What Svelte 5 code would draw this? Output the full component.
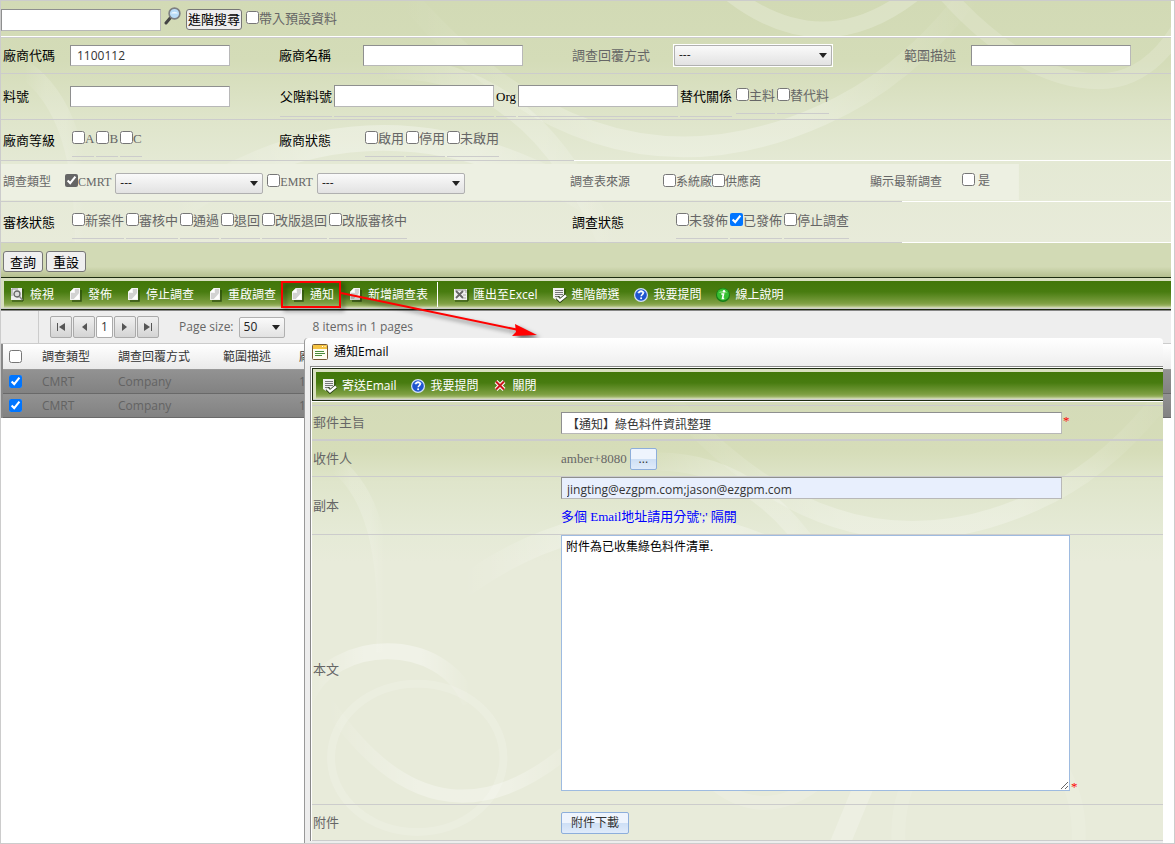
<script>
  let keyword = $state('');
  let vendorCode = $state('1100112');
  let subject = $state('【通知】綠色料件資訊整理');
  let cc = $state('jingting@ezgpm.com;jason@ezgpm.com');
  let content = $state('附件為已收集綠色料件清單.');

  const grades = ['A', 'B', 'C'];
  const vendorStates = ['啟用', '停用', '未啟用'];
  const reviewStates = ['新案件', '審核中', '通過', '退回', '改版退回', '改版審核中'];
  const surveyStates = ['未發佈', '已發佈', '停止調查'];

  const tools = [
    { icon: 'view', text: '檢視' },
    { icon: 'doc', text: '發佈' },
    { icon: 'doc', text: '停止調查' },
    { icon: 'doc', text: '重啟調查' },
    { icon: 'doc', text: '通知', marked: true },
    { icon: 'doc', text: '新增調查表' },
    { icon: 'excel', text: '匯出至Excel', divider: true },
    { icon: 'check', text: '進階篩選' },
    { icon: 'help', text: '我要提問' },
    { icon: 'info', text: '線上說明' }
  ];

  const dialogTools = [
    { icon: 'check', text: '寄送Email' },
    { icon: 'help', text: '我要提問' },
    { icon: 'close', text: '關閉' }
  ];

  const rows = [
    { type: 'CMRT', reply: 'Company', scope: '', vendor: '1100112' },
    { type: 'CMRT', reply: 'Company', scope: '', vendor: '1100112' }
  ];
</script>

{#snippet icon(name)}
  <svg class="icon" viewBox="0 0 16 16" aria-hidden="true">
    {#if name === 'doc'}
      <path d="M13 3v11H4" fill="none" stroke="#24440a" stroke-width="1.500" opacity=".8" />
      <path d="M6 1h6v12H2V5z" fill="#f4f4f4" />
      <path d="M7 2h4v4L6 12H3V6h4z" fill="#d2d2d2" />
      <path d="M6 1v4H2z" fill="#fff" />
      <path d="M11 7v5H6z" fill="#fff" />
    {:else if name === 'view'}
      <path d="M13 2v12H2" fill="none" stroke="#24440a" />
      <rect x="1" y="1" width="11" height="12" fill="#eee" />
      <path d="M2 9V2h6" fill="none" stroke="#999" />
      <circle cx="7" cy="7" r="3" fill="#ddd" stroke="#666" stroke-width="1.300" />
      <path d="M9.500 9.500l3 3.500" stroke="#888" stroke-width="1.500" />
    {:else if name === 'excel'}
      <path d="M15 3v11H2" fill="none" stroke="#24440a" />
      <rect x="1" y="2" width="13" height="11" fill="#f0f0f0" />
      <path d="M2 3h11v3" fill="none" stroke="#999" />
      <path d="M3 4l7 7M10 4l-7 7" stroke="#666" stroke-width="1.800" />
      <path d="M10 8h3M10 11h3" stroke="#aaa" />
    {:else if name === 'check'}
      <path d="M1 1h11v12H4l-3-2z" fill="#f0f0f0" />
      <path d="M13 2v6" stroke="#24440a" />
      <path d="M3 3.500h8M3 5.500h8M3 7.500h8M3 9.500h5" stroke="#777" />
      <path d="M5 10.500l3 3 6-5" fill="none" stroke="#263c15" stroke-width="4" />
      <path d="M5 10.500l3 3 6-5" fill="none" stroke="#fff" stroke-width="2.400" />
    {:else if name === 'help'}
      <circle cx="7" cy="8" r="7" fill="#d5e2fb" />
      <circle cx="7" cy="8" r="5.800" fill="#1f55cf" />
      <path d="M2.500 6a5 4 0 0 1 9 0" fill="#5f91e9" />
      <path d="M4.800 6.300c0-3 4.600-2.700 4.400-.2-.1 1.300-1.900 1.600-2 3.200" fill="none" stroke="#fff" stroke-width="1.600" />
      <circle cx="7.100" cy="11.300" r="1" fill="#fff" />
    {:else if name === 'info'}
      <circle cx="7" cy="8" r="7" fill="#167d18" />
      <circle cx="7" cy="7.500" r="6" fill="#36bf32" />
      <path d="M2.500 6a5 4 0 0 1 9 0" fill="#72d969" />
      <circle cx="8" cy="4.300" r="1.200" fill="#fff" />
      <path d="M5.300 7h2.200l-1 4.500h1.700" fill="none" stroke="#fff" stroke-width="1.600" />
    {:else if name === 'close'}
      <path d="M3 3.500l8 8M11 3.500l-8 8" stroke="#fff" stroke-width="4" />
      <path d="M3 3.500l8 8M11 3.500l-8 8" stroke="#c9171b" stroke-width="2" />
    {/if}
  </svg>
{/snippet}

{#snippet options(items, checked)}
  <div class="options">
    {#each items as item}
      <label class="option"><input type="checkbox" checked={item === checked} />{item}</label>
    {/each}
  </div>
{/snippet}

{#snippet combo(text, name)}
  <span class="combo"><select aria-label={name}><option>{text}</option></select></span>
{/snippet}

{#snippet swirls()}
  <g fill="none" stroke="url(#fade)">
    <path d="M20 60Q80 100 72 250" stroke-width="16" opacity=".15" />
    <path d="M150 185Q330 55 530 185" stroke-width="22" opacity=".3" />
    <path d="M350 -10Q520 190 720 100Q800 65 860 -20" stroke-width="18" opacity=".25" />
    <path d="M330 60Q470 50 540 230" stroke-width="18" opacity=".2" />
  </g>
{/snippet}

<main class="page">
  <form class="search" onsubmit={(e) => e.preventDefault()}>
    <svg class="swirl" viewBox="0 0 1170 242" preserveAspectRatio="xMinYMin slice" aria-hidden="true">
      <defs>
        <linearGradient id="fade">
          <stop offset="0" stop-color="#fff" stop-opacity="0" />
          <stop offset=".35" stop-color="#fff" />
          <stop offset=".7" stop-color="#fff" />
          <stop offset="1" stop-color="#fff" stop-opacity="0" />
        </linearGradient>
      </defs>
      {@render swirls()}
      <g fill="none" stroke="#fff">
        <path d="M635 -10Q720 60 805 -10" stroke-width="14" opacity=".22" />
        <path d="M825 -10Q900 75 970 70Q1020 65 1050 -10" stroke-width="14" opacity=".16" />
      </g>
    </svg>

    <div class="row quick">
      <input class="text" type="text" bind:value={keyword} aria-label="搜尋" />
      <svg class="magnifier" viewBox="0 0 18 18" aria-hidden="true">
        <path d="M2 16l5-6" stroke="#444" stroke-width="3" stroke-linecap="round" />
        <circle cx="10.500" cy="6.500" r="5.400" fill="#b9dcf8" stroke="#7d7f82" stroke-width="1.600" />
        <path d="M7 6.500a4 3.500 0 0 1 7 0z" fill="#eef7ff" />
      </svg>
      <button type="button">進階搜尋</button>
      <label class="inline"><input type="checkbox" />帶入預設資料</label>
    </div>

    <div class="row cols first">
      <label class="name" for="vendor-code">廠商代碼</label>
      <div><input class="text" id="vendor-code" type="text" bind:value={vendorCode} /></div>
      <label class="name" for="vendor-name">廠商名稱</label>
      <div><input class="text" id="vendor-name" type="text" /></div>
      <span class="name soft">調查回覆方式</span>
      <div class="framed">{@render combo('---', '調查回覆方式')}</div>
      <label class="name soft" for="scope">範圍描述</label>
      <div><input class="text" id="scope" type="text" /></div>
    </div>

    <div class="row cols second">
      <label class="name" for="part">料號</label>
      <div><input class="text" id="part" type="text" /></div>
      <div class="parts">
        <label class="under" for="parent-part">父階料號</label>
        <span class="under"><input class="text" id="parent-part" type="text" /></span>
        <label class="under" for="org">Org</label>
        <span class="under"><input class="text" id="org" type="text" /></span>
        <span class="under">替代關係</span>
        {@render options(['主料', '替代料'])}
      </div>
    </div>

    <div class="row cols third">
      <span class="name">廠商等級</span>
      {@render options(grades)}
      <span class="name">廠商狀態</span>
      {@render options(vendorStates)}
    </div>

    <div class="row types">
      <span>調查類型</span>
      <div class="group">
        <label class="inline gray"><input type="checkbox" checked />CMRT</label>
        {@render combo('---', 'CMRT')}
        <label class="inline"><input type="checkbox" />EMRT</label>
        {@render combo('---', 'EMRT')}
      </div>
      <span>調查表來源</span>
      <div class="group tight">
        <label class="inline"><input type="checkbox" />系統廠</label>
        <label class="inline"><input type="checkbox" />供應商</label>
      </div>
      <span>顯示最新調查</span>
      <div><label class="inline spaced"><input type="checkbox" />是</label></div>
    </div>

    <div class="row cols fifth">
      <span class="name">審核狀態</span>
      <div class="span3">{@render options(reviewStates)}</div>
      <span class="name">調查狀態</span>
      {@render options(surveyStates, '已發佈')}
    </div>

    <div class="actions">
      <button type="submit">查詢</button>
      <button type="reset">重設</button>
    </div>
  </form>

  <div class="bar">
    <nav class="tools">
      {#each tools as tool}
        {#if tool.divider}<span class="divider"></span>{/if}
        <button type="button" class="tool" class:marked={tool.marked}>
          {@render icon(tool.icon)}{tool.text}
          {#if tool.marked}
            <svg class="pointer" viewBox="0 0 270 70" aria-hidden="true">
              <g fill="none" stroke="#f00" stroke-width="2">
                <rect x="3" y="3" width="58" height="25" />
                <path d="M62 14L240 51" />
              </g>
              <path d="M236 45l22 11-25 1 4-4z" fill="#f00" />
            </svg>
          {/if}
        </button>
      {/each}
    </nav>
  </div>

  <div class="pager">
    <button type="button" aria-label="First page"><svg viewBox="0 0 10 10"><path d="M1 1h1v8H1zM9 1v8L3 5z" /></svg></button>
    <button type="button" aria-label="Previous page"><svg viewBox="0 0 10 10"><path d="M8 1v8L3 5z" /></svg></button>
    <button type="button" class="current">1</button>
    <button type="button" aria-label="Next page"><svg viewBox="0 0 10 10"><path d="M2 1v8l5-4z" /></svg></button>
    <button type="button" aria-label="Last page"><svg viewBox="0 0 10 10"><path d="M8 1h1v8H8zM1 1v8l6-4z" /></svg></button>
    <span class="size">Page size:</span>
    {@render combo('50', 'Page size')}
    <span class="total">8 items in 1 pages</span>
  </div>

  <table class="grid">
    <thead>
      <tr>
        <th class="tick"><input type="checkbox" aria-label="全選" /></th>
        <th class="type">調查類型</th>
        <th class="reply">調查回覆方式</th>
        <th class="scope">範圍描述</th>
        <th>廠商</th>
      </tr>
    </thead>
    <tbody>
      {#each rows as row}
        <tr>
          <td><input type="checkbox" checked aria-label="選取" /></td>
          <td>{row.type}</td>
          <td>{row.reply}</td>
          <td>{row.scope}</td>
          <td>{row.vendor}</td>
        </tr>
      {/each}
    </tbody>
  </table>

  <section class="dialog" role="dialog" aria-labelledby="dialog-title">
    <header>
      <svg class="form-icon" viewBox="0 0 16 16" aria-hidden="true">
        <rect x=".5" y=".5" width="15" height="15" rx="1" fill="#fffdf0" stroke="#765a35" />
        <path d="M1 1h14v4H1z" fill="#f5c343" />
        <path d="M10 2.500h1M12.500 2.500h1" stroke="#fff" />
        <path d="M3 7.500h9M3 9.500h10M3 11.500h7" stroke="#4a8c3a" />
      </svg>
      <h2 id="dialog-title">通知Email</h2>
    </header>
    <div class="frame">
      <div class="bar">
        <nav class="tools">
          {#each dialogTools as tool}
            <button type="button" class="tool">{@render icon(tool.icon)}{tool.text}</button>
          {/each}
        </nav>
      </div>
      <form class="mail" onsubmit={(e) => e.preventDefault()}>
        <svg class="swirl" viewBox="0 0 851 438" preserveAspectRatio="xMinYMin slice" aria-hidden="true">
          {@render swirls()}
          <g fill="none" stroke="#fff">
            <path d="M-5 295C20 235 130 230 158 300" stroke="url(#fade)" stroke-width="16" opacity=".35" />
            <ellipse cx="105" cy="355" rx="86" ry="74" stroke-width="8" opacity=".15" />
            <path d="M15 300Q130 470 275 330" stroke="url(#fade)" stroke-width="13" opacity=".3" />
            <path d="M395 375Q450 425 510 375" stroke-width="14" opacity=".14" />
            <path d="M560 360L525 445" stroke-width="20" opacity=".22" />
            <ellipse cx="675" cy="430" rx="90" ry="110" stroke-width="14" opacity=".1" />
          </g>
        </svg>
        <div class="line subject">
          <label for="subject">郵件主旨</label>
          <div><input class="text" id="subject" type="text" bind:value={subject} /><em>*</em></div>
        </div>
        <div class="line to">
          <span>收件人</span>
          <div>amber+8080<button type="button" class="blue more">...</button></div>
        </div>
        <div class="line cc">
          <label for="cc">副本</label>
          <div>
            <input class="text" id="cc" type="text" bind:value={cc} />
            <p>多個 Email地址請用分號';' 隔開</p>
          </div>
        </div>
        <div class="line body">
          <label for="content">本文</label>
          <div><textarea id="content" bind:value={content}></textarea><em>*</em></div>
        </div>
        <div class="line file">
          <span>附件</span>
          <div><button type="button" class="blue">附件下載</button></div>
        </div>
      </form>
    </div>
  </section>
</main>

<style>
  :global(body) {
    margin: 0;
    background: #fff;
  }

  .page {
    --ui: 'Open Sans', 'Noto Sans CJK TC', sans-serif;
    position: relative;
    box-sizing: border-box;
    min-height: 100vh;
    padding-right: 3px;
    border: 1px solid #ccc;
    overflow: hidden;
    font: 13px/18px 'Liberation Serif', 'Noto Sans CJK TC', serif;
    color: #666;
  }

  input,
  textarea,
  select {
    box-sizing: border-box;
    margin: 0;
  }

  input[type='checkbox'] {
    flex: none;
    width: 13px;
    height: 13px;
  }

  .text {
    width: 160px;
    height: 21px;
    padding: 1px 6px;
    border: 1px solid;
    border-color: #8e8f8f #b8b8b8 #b8b8b8 #8e8f8f;
    background: #fff;
    color: #333;
    font: 12px/16px var(--ui);
  }

  button {
    box-sizing: border-box;
    padding: 0 1px;
    font: 13px/18px 'Noto Sans CJK TC', sans-serif;
    white-space: nowrap;
  }

  .search button {
    height: 21px;
    border: 1px solid #767676;
    border-radius: 3px;
    background: #efefef;
    color: #000;
  }

  /* search form */
  .search {
    position: relative;
    background: linear-gradient(#d2dab5, #d4dcb8 60px, #dfe5cb 120px, #e4e9d4 160px, #e8ebda 241px);
  }

  .swirl {
    position: absolute;
    inset: 0;
    width: 100%;
    height: 100%;
    pointer-events: none;
  }

  .row {
    --split: 100%;
    position: relative;
    box-sizing: border-box;
    height: 41px;
    background: linear-gradient(to right, #ccc var(--split), #fff var(--split)) bottom / 100% 1px no-repeat;
    white-space: nowrap;
  }

  .quick {
    display: flex;
    align-items: center;
    height: 37px;
    border-bottom: 1px solid #ccc;
    background: linear-gradient(#fff, #fff) bottom / 100% 1px no-repeat;
  }

  .quick .text {
    margin-top: 2px;
    height: 22px;
  }

  .magnifier {
    width: 18px;
    height: 18px;
    margin: 0 4px 6px 3px;
  }

  .quick .inline {
    margin-left: 4px;
  }

  .inline {
    display: inline-flex;
    align-items: center;
  }

  .inline input {
    margin-bottom: 3px;
  }

  .cols {
    display: grid;
    grid-template-columns: 67px 209fr 84px 209fr 102px 230fr 67px 200fr;
    align-items: center;
    padding-left: 2px;
  }

  .first {
    height: 36px;
  }

  .second {
    height: 46px;
  }

  .third {
    --split: 49%;
  }

  .fifth {
    --split: 77%;
  }

  .name {
    color: #000;
  }

  .soft {
    color: #666;
  }

  .cols > div > .text,
  .framed {
    display: block;
    margin-bottom: 2px;
  }

  .parts {
    grid-column: 3 / -1;
    display: flex;
    align-items: flex-end;
    gap: 2px;
    margin-top: 6px;
    padding-left: 1px;
    color: #000;
  }

  .under {
    box-sizing: border-box;
    height: 32px;
    padding: 3px 0;
    border-bottom: 1px solid #ccc;
  }

  .under .text {
    display: block;
    height: 22px;
    margin-top: -3px;
  }

  .options {
    display: flex;
    align-items: flex-end;
    gap: 2px;
    height: 35px;
    margin-bottom: 2px;
    padding-left: 2px;
    color: #666;
  }

  .parts .options {
    height: 31px;
    margin-bottom: 3px;
  }

  .option {
    display: flex;
    align-items: center;
    padding-bottom: 8px;
    border-bottom: 1px solid #ccc;
  }

  .option input {
    margin-bottom: 3px;
  }

  .span3 {
    grid-column: 2 / 5;
  }

  .types {
    --split: 77%;
    display: grid;
    grid-template-columns: 62px 505fr 93px 207fr 92px 209fr;
    align-items: center;
    padding-left: 2px;
    background:
      linear-gradient(to right, #ccc var(--split), #fff var(--split)) bottom / 100% 1px no-repeat,
      linear-gradient(#edf0e2, #edf0e2) 0 3px / 87% 36px no-repeat;
    font-size: 12px;
  }

  .group {
    display: flex;
    align-items: center;
    gap: 4px;
  }

  .group .combo {
    margin-top: 3px;
  }

  .tight {
    gap: 0;
  }

  .spaced {
    gap: 3px;
  }

  .gray input {
    accent-color: #666;
  }

  .combo {
    position: relative;
    display: inline-block;
    width: 148px;
    height: 21px;
  }

  .combo select {
    display: block;
    width: 100%;
    height: 100%;
    padding: 0 4px;
    border: 1px solid #b0b0b0;
    border-radius: 2px;
    background: linear-gradient(#fafafa, #e2e2e2);
    color: #222;
    font: 12px/18px var(--ui);
    appearance: none;
  }

  .combo::after {
    content: '';
    position: absolute;
    top: 8px;
    right: 5px;
    border: 4px solid transparent;
    border-top: 5px solid #222;
    border-bottom: 0;
    pointer-events: none;
  }

  .framed .combo {
    display: block;
    width: 158px;
    outline: 1px solid #fff;
  }

  .actions {
    position: relative;
    display: flex;
    gap: 3px;
    box-sizing: border-box;
    height: 34px;
    padding: 8px 2px;
    background: linear-gradient(#d2dab5 70%, #b5bf8f);
  }

  .actions button {
    width: 40px;
  }

  /* green toolbars */
  .bar {
    padding: 3px 0 1px 3px;
    border: solid #1d2b10;
    border-width: 1px 0;
    background: #d8dfbf;
    box-shadow: inset 0 -1px #ccc;
  }

  .tools {
    display: flex;
    align-items: center;
    height: 27px;
    padding-left: 6px;
    gap: 14px;
    background: linear-gradient(#427709, #487c10 40%, #7d9f42 82%, #94ae5d 90%, #d8dfbf);
  }

  .tool {
    display: flex;
    align-items: center;
    gap: 4px;
    padding: 0;
    border: 0;
    background: none;
    color: #fff;
    font: 12px/18px var(--ui);
  }

  .icon {
    width: 16px;
    height: 16px;
  }

  .divider {
    width: 1px;
    height: 25px;
    margin: 0 1px 0 -5px;
    background: #fff;
  }

  .marked {
    position: relative;
  }

  .pointer {
    position: absolute;
    top: -7px;
    left: -11px;
    width: 270px;
    height: 70px;
    z-index: 1;
    filter: drop-shadow(3px 3px 2px #0008);
    pointer-events: none;
  }

  /* result grid */
  .pager {
    display: flex;
    align-items: center;
    gap: 1px;
    box-sizing: border-box;
    height: 34px;
    padding-left: 49px;
    border-top: 1px solid #888;
    border-bottom: 1px solid #ccc;
    background: linear-gradient(#ccc, #ccc) 37px 0 / 1px 100% no-repeat #eee;
    font: 12px/18px var(--ui);
  }

  .pager button {
    display: flex;
    align-items: center;
    justify-content: center;
    width: 22px;
    height: 22px;
    border: 1px solid #aaa;
    border-radius: 2px;
    background: linear-gradient(#f0f0f0, #d4d4d4);
    font: 12px/18px var(--ui);
  }

  .pager button svg {
    width: 10px;
    height: 10px;
    fill: #555;
  }

  .pager .current {
    width: 17px;
    background: #fff;
    color: #333;
  }

  .pager .combo {
    width: 46px;
  }

  .size {
    margin: 0 4px 0 19px;
  }

  .total {
    margin-left: 27px;
  }

  .grid {
    width: 100%;
    border-left: 2px solid #888;
    border-collapse: separate;
    border-spacing: 0;
    table-layout: fixed;
    font: 12px/18px var(--ui);
  }

  .grid th,
  .grid td {
    box-sizing: border-box;
    height: 24px;
    padding: 0;
    border-bottom: 1px solid #696969;
    font-weight: normal;
    text-align: left;
  }

  .grid th {
    height: 26px;
    border-color: #999;
    background: linear-gradient(#fff, #eaeaea);
    color: #333;
  }

  .grid td {
    background: linear-gradient(#929292, #828282);
    color: #636363;
  }

  .grid input {
    display: block;
    margin-left: 6px;
  }

  .tick {
    width: 39px;
  }

  .type {
    width: 76px;
  }

  .reply {
    width: 105px;
  }

  .scope {
    width: 76px;
  }

  /* notification dialog */
  .dialog {
    position: absolute;
    z-index: 2;
    top: 337px;
    left: 303px;
    right: 11px;
    border-left: 1px solid #999;
    border-radius: 4px 4px 0 0;
    background: linear-gradient(#fff, #ededed 30px);
  }

  .dialog header {
    display: flex;
    align-items: center;
    gap: 6px;
    height: 28px;
    padding-left: 7px;
  }

  .form-icon {
    width: 16px;
    height: 16px;
  }

  h2 {
    margin: 0;
    color: #000;
    font: 12px/18px var(--ui);
  }

  .frame {
    margin-left: 5px;
    padding: 1px 0 0 1px;
    border: solid #888;
    border-width: 1px 0 0 1px;
    background: #fff;
  }

  .frame .bar {
    border-left-width: 1px;
  }

  .mail {
    position: relative;
    margin-top: 1px;
    padding-top: 3px;
    background: linear-gradient(#d4dbb8, #d6ddb9 50px, #dfe5cb 80px, #e5ead6 130px, #e8ebda 160px);
  }

  .line {
    position: relative;
    display: grid;
    grid-template-columns: 248px 1fr;
    align-items: center;
    box-sizing: border-box;
    padding-left: 1px;
    border-bottom: 1px solid #ccc;
  }

  .line .text {
    width: 501px;
    height: 22px;
    padding: 3px 5px 1px;
  }

  .line > div {
    display: flex;
    align-items: center;
  }

  .line em {
    align-self: flex-start;
    padding-left: 1px;
    color: #f00;
    font-style: normal;
  }

  .subject {
    height: 36px;
    border-top: 1px solid #ccc;
    border-bottom-width: 2px;
  }

  .to {
    height: 36px;
  }

  .cc {
    height: 58px;
  }

  .cc > div {
    display: block;
    align-self: start;
  }

  .cc .text {
    display: block;
    background: #e8effd;
  }

  .cc p {
    margin: 9px 0 0;
    color: #00f;
  }

  .body {
    height: 270px;
  }

  .body > div {
    align-self: start;
  }

  textarea {
    width: 509px;
    height: 256px;
    padding: 2px 4px;
    border: 1px solid #9ebbe0;
    color: #000;
    font: 12px/18px var(--ui);
  }

  .body em {
    align-self: flex-end;
    line-height: 9px;
  }

  .file {
    height: 36px;
    margin-bottom: 2px;
  }

  .blue {
    height: 22px;
    padding: 0 9px;
    border: 1px solid #8daedb;
    border-radius: 2px;
    background: linear-gradient(#eef4fd 50%, #cddff5 50%, #e0ebfa);
    color: #333;
    font: 12px/18px var(--ui);
  }

  .more {
    width: 27px;
    margin-left: 3px;
    padding: 0;
  }
</style>
